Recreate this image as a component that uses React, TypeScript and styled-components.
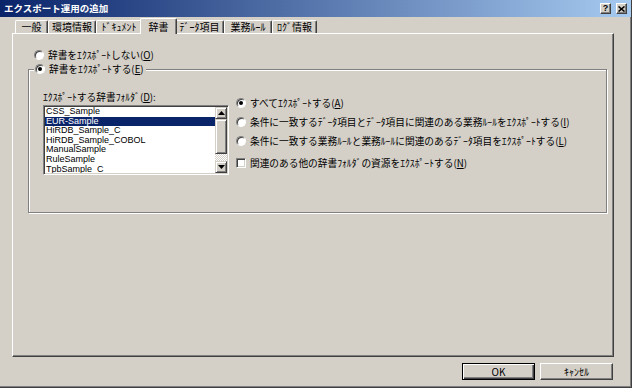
import { FC } from "react";
import styled, { createGlobalStyle, css } from "styled-components";

const GlobalStyle = createGlobalStyle`
  html, body {
    margin: 0;
    padding: 0;
    background: #ffffff;
  }

  body {
    font-family: "Noto Sans CJK JP", "Liberation Sans", sans-serif;
    font-size: 9.7px;
    color: #000000;
  }
`;

const Dialog = styled.div`
  width: 632px;
  height: 388px;
  box-sizing: border-box;
  display: flex;
  flex-direction: column;
  background: #d4d0c8;
  border-right: 1px solid #404040;
  border-bottom: 1px solid #404040;
  box-shadow: inset -1px -1px 0 #808080;
  overflow: hidden;
`;

const TitleBar = styled.div`
  flex: none;
  height: 17px;
  display: flex;
  align-items: center;
  padding: 0 4px 0 4px;
  background: linear-gradient(to right, #0a246a, #a6caf0);
`;

const TitleText = styled.div`
  flex: 1;
  color: #ffffff;
  font-weight: bold;
  font-size: 9.5px;
  line-height: 17px;
  white-space: nowrap;
`;

const CaptionButton = styled.div<{ $gap?: number }>`
  width: 11px;
  height: 11px;
  box-sizing: border-box;
  margin-left: ${(p) => p.$gap ?? 0}px;
  display: flex;
  align-items: center;
  justify-content: center;
  background: #d4d0c8;
  border: 1px solid;
  border-color: #ffffff #404040 #404040 #ffffff;
  box-shadow: inset -1px -1px 0 #808080;
  font-family: "Liberation Sans", sans-serif;
  font-weight: bold;
  font-size: 9px;
  line-height: 1;
`;

const Body = styled.div`
  flex: 1;
  display: flex;
  flex-direction: column;
  padding: 1px 17px 0 12px;
`;

const TabStrip = styled.div`
  height: 15px;
  display: flex;
  align-items: flex-end;
  padding-left: 3px;
`;

const Tab = styled.div<{ $w: number; $active?: boolean }>`
  width: ${(p) => p.$w}px;
  height: 13px;
  box-sizing: border-box;
  display: flex;
  align-items: center;
  justify-content: center;
  background: #d4d0c8;
  border: 1px solid #ffffff;
  border-bottom: none;
  border-right-color: #404040;
  border-radius: 2px 2px 0 0;
  box-shadow: inset -1px 0 0 #808080;
  font-size: 10px;
  line-height: 1;
  white-space: nowrap;

  ${(p) =>
    p.$active &&
    css`
      width: ${p.$w + 4}px;
      height: 16px;
      margin: 0 -2px -1px;
      position: relative;
      z-index: 1;
    `}
`;

const Panel = styled.div`
  height: 324px;
  box-sizing: border-box;
  display: flex;
  flex-direction: column;
  padding-top: 15px;
  border: 1px solid;
  border-color: #ffffff #404040 #404040 #ffffff;
  box-shadow: inset -1px -1px 0 #808080;
`;

const OptionRow = styled.div<{ $indent?: number; $space?: number }>`
  height: 12px;
  display: flex;
  align-items: center;
  gap: 4px;
  margin-left: ${(p) => p.$indent ?? 0}px;
  margin-top: ${(p) => p.$space ?? 0}px;
  line-height: 12px;
  white-space: nowrap;
`;

const Radio = styled.span<{ $checked?: boolean }>`
  flex: none;
  width: 10px;
  height: 10px;
  box-sizing: border-box;
  display: flex;
  align-items: center;
  justify-content: center;
  border-radius: 50%;
  border: 1px solid;
  border-color: #808080 #ffffff #ffffff #808080;
  box-shadow: inset 1px 1px 0 #404040;
  background: #ffffff;

  &::after {
    content: "";
    display: ${(p) => (p.$checked ? "block" : "none")};
    width: 4px;
    height: 4px;
    border-radius: 50%;
    background: #000000;
  }
`;

const CheckBox = styled.span`
  flex: none;
  width: 10px;
  height: 10px;
  box-sizing: border-box;
  border: 1px solid;
  border-color: #808080 #ffffff #ffffff #808080;
  box-shadow: inset 1px 1px 0 #404040, inset -1px -1px 0 #d4d0c8;
  background: #ffffff;
`;

const GroupBox = styled.fieldset`
  margin: 2px 6px 0 15px;
  padding: 0;
  min-inline-size: 0;
  border: 1px solid #808080;
  box-shadow: inset 1px 1px 0 #ffffff, 1px 1px 0 #ffffff;
`;

const GroupLegend = styled.legend`
  height: 12px;
  display: flex;
  align-items: center;
  gap: 4px;
  margin-left: 5px;
  padding: 0 2px 0 1px;
  background: #d4d0c8;
  line-height: 12px;
  white-space: nowrap;
`;

const GroupContent = styled.div`
  display: flex;
  align-items: flex-start;
  gap: 7px;
  padding: 16px 0 37px 14px;
`;

const FolderColumn = styled.div`
  display: flex;
  flex-direction: column;
  gap: 2px;
`;

const FieldLabel = styled.div`
  height: 12px;
  line-height: 12px;
  white-space: nowrap;
`;

const ListBox = styled.div`
  width: 186px;
  height: 70px;
  box-sizing: border-box;
  display: flex;
  padding: 0 1px 1px 1px;
  background: #ffffff;
  border: 1px solid;
  border-color: #808080 #ffffff #ffffff #808080;
  box-shadow: inset 1px 1px 0 #404040, inset -1px -1px 0 #d4d0c8;
`;

const ListItems = styled.div`
  flex: 1;
  overflow: hidden;
  margin-top: 1px;
  font-family: "Liberation Sans", Arial, sans-serif;
  font-size: 9px;
`;

const ListItem = styled.div<{ $selected?: boolean }>`
  height: 9.6px;
  line-height: 9.6px;
  padding-left: 1px;
  white-space: nowrap;
  background: ${(p) => (p.$selected ? "#0a246a" : "transparent")};
  color: ${(p) => (p.$selected ? "#ffffff" : "#000000")};
`;

const ScrollBar = styled.div`
  flex: none;
  width: 12px;
  margin-top: 1px;
  display: flex;
  flex-direction: column;
`;

const raised = css`
  box-sizing: border-box;
  background: #d4d0c8;
  border: 1px solid;
  border-color: #d4d0c8 #404040 #404040 #d4d0c8;
  box-shadow: inset 1px 1px 0 #ffffff, inset -1px -1px 0 #808080;
`;

const ScrollButton = styled.div`
  ${raised};
  flex: none;
  height: 12px;
  display: flex;
  align-items: center;
  justify-content: center;
`;

const ScrollThumb = styled.div`
  ${raised};
  flex: none;
  height: 35px;
`;

const ScrollTrack = styled.div`
  flex: 1;
  background: repeating-conic-gradient(#ffffff 0 25%, #d4d0c8 0 50%) 0 0 / 2px 2px;
`;

const OptionColumn = styled.div`
  display: flex;
  flex-direction: column;
  padding-top: 6px;
`;

const ButtonRow = styled.div`
  display: flex;
  justify-content: flex-end;
  gap: 5px;
  margin-top: 6px;
  padding-right: 1px;
`;

const PushButton = styled.div<{ $default?: boolean }>`
  width: 73px;
  height: 17px;
  box-sizing: border-box;
  display: flex;
  align-items: center;
  justify-content: center;
  background: #d4d0c8;
  font-size: 10px;
  line-height: 1;

  ${(p) =>
    p.$default
      ? css`
          border: 1px solid #000000;
          box-shadow: inset 1px 1px 0 #ffffff, inset -1px -1px 0 #404040,
            inset -2px -2px 0 #808080;
        `
      : css`
          border: 1px solid;
          border-color: #ffffff #404040 #404040 #ffffff;
          box-shadow: inset -1px -1px 0 #808080;
        `}
`;

const Key = styled.span`
  text-decoration: underline;
`;

const Mnemonic: FC<{ text: string; k: string; tail?: string }> = ({ text, k, tail }) => (
  <span>
    {text}(<Key>{k}</Key>){tail}
  </span>
);

const Arrow: FC<{ up?: boolean }> = ({ up }) => (
  <svg width="7" height="4" viewBox="0 0 7 4">
    <polygon points={up ? "3.5,0 7,4 0,4" : "0,0 7,0 3.5,4"} fill="#000" />
  </svg>
);

const tabs = [
  { label: "一般", w: 33 },
  { label: "環境情報", w: 48 },
  { label: "ﾄﾞｷｭﾒﾝﾄ", w: 46 },
  { label: "辞書", w: 33, active: true },
  { label: "ﾃﾞｰﾀ項目", w: 49 },
  { label: "業務ﾙｰﾙ", w: 48 },
  { label: "ﾛｸﾞ情報", w: 45 },
];

const folders = [
  "CSS_Sample",
  "EUR-Sample",
  "HiRDB_Sample_C",
  "HiRDB_Sample_COBOL",
  "ManualSample",
  "RuleSample",
  "TpbSample_C",
];

const App: FC = () => {
  return (
    <>
      <GlobalStyle />
      <Dialog>
        <TitleBar>
          <TitleText>エクスポート運用の追加</TitleText>
          <CaptionButton>?</CaptionButton>
          <CaptionButton $gap={5}>
            <svg width="7" height="6" viewBox="0 0 7 6">
              <path d="M0.5 0.5 L6.5 5.5 M6.5 0.5 L0.5 5.5" stroke="#000" strokeWidth="1.6" />
            </svg>
          </CaptionButton>
        </TitleBar>

        <Body>
          <TabStrip>
            {tabs.map((t) => (
              <Tab key={t.label} $w={t.w} $active={t.active}>
                {t.label}
              </Tab>
            ))}
          </TabStrip>

          <Panel>
            <OptionRow $indent={21}>
              <Radio />
              <Mnemonic text="辞書をｴｸｽﾎﾟｰﾄしない" k="O" />
            </OptionRow>

            <GroupBox>
              <GroupLegend>
                <Radio $checked />
                <Mnemonic text="辞書をｴｸｽﾎﾟｰﾄする" k="E" />
              </GroupLegend>

              <GroupContent>
                <FolderColumn>
                  <FieldLabel>
                    <Mnemonic text="ｴｸｽﾎﾟｰﾄする辞書ﾌｫﾙﾀﾞ" k="D" tail=":" />
                  </FieldLabel>
                  <ListBox>
                    <ListItems>
                      {folders.map((f) => (
                        <ListItem key={f} $selected={f === "EUR-Sample"}>
                          {f}
                        </ListItem>
                      ))}
                    </ListItems>
                    <ScrollBar>
                      <ScrollButton>
                        <Arrow up />
                      </ScrollButton>
                      <ScrollThumb />
                      <ScrollTrack />
                      <ScrollButton>
                        <Arrow />
                      </ScrollButton>
                    </ScrollBar>
                  </ListBox>
                </FolderColumn>

                <OptionColumn>
                  <OptionRow>
                    <Radio $checked />
                    <Mnemonic text="すべてｴｸｽﾎﾟｰﾄする" k="A" />
                  </OptionRow>
                  <OptionRow $space={7}>
                    <Radio />
                    <Mnemonic
                      text="条件に一致するﾃﾞｰﾀ項目とﾃﾞｰﾀ項目に関連のある業務ﾙｰﾙをｴｸｽﾎﾟｰﾄする"
                      k="I"
                    />
                  </OptionRow>
                  <OptionRow $space={7}>
                    <Radio />
                    <Mnemonic
                      text="条件に一致する業務ﾙｰﾙと業務ﾙｰﾙに関連のあるﾃﾞｰﾀ項目をｴｸｽﾎﾟｰﾄする"
                      k="L"
                    />
                  </OptionRow>
                  <OptionRow $space={10}>
                    <CheckBox />
                    <Mnemonic text="関連のある他の辞書ﾌｫﾙﾀﾞの資源をｴｸｽﾎﾟｰﾄする" k="N" />
                  </OptionRow>
                </OptionColumn>
              </GroupContent>
            </GroupBox>
          </Panel>

          <ButtonRow>
            <PushButton $default>OK</PushButton>
            <PushButton>ｷｬﾝｾﾙ</PushButton>
          </ButtonRow>
        </Body>
      </Dialog>
    </>
  );
};

export default App;
